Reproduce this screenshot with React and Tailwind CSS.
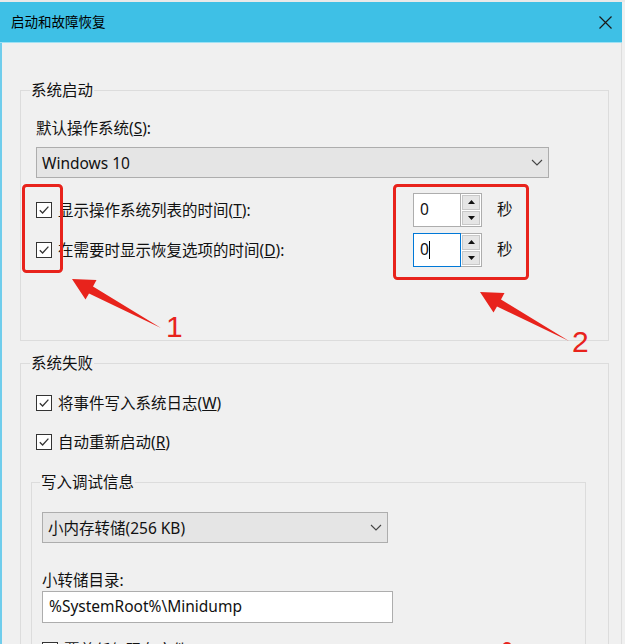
import React from 'react';

const Check = () => (
  <span className="w-[16px] h-[16px] border border-[#333333] bg-white flex items-center justify-center shrink-0">
    <svg width="12" height="12" viewBox="0 0 12 12">
      <path d="M1.8 6.2 L4.6 9 L10.4 2.6" fill="none" stroke="#333333" strokeWidth="1.3" />
    </svg>
  </span>
);

const Chevron = () => (
  <svg width="12" height="7" viewBox="0 0 12 7">
    <path d="M1 1 L6 6 L11 1" fill="none" stroke="#444444" strokeWidth="1.1" />
  </svg>
);

function Select({ value, className }) {
  return (
    <div className={`h-[31px] bg-[#e5e5e5] border border-[#adadad] flex items-center justify-between pl-[5px] pr-[5px] ${className}`}>
      <span className="text-[15.5px] leading-[20px]">{value}</span>
      <Chevron />
    </div>
  );
}

function Spin({ focused }) {
  return (
    <div className="flex h-[34px] w-[69px]">
      <div
        className={`w-[48px] h-full bg-white border flex items-center pl-[6px] text-[15.5px] ${
          focused ? 'border-[#0078d7]' : 'border-[#adadad]'
        }`}
      >
        <span>0</span>
        {focused && <span className="w-[1px] h-[18px] bg-black" />}
      </div>
      <div className="w-[21px] h-full border-y border-r border-[#adadad] bg-white flex flex-col p-[1px] gap-[1px]">
        <div className="flex-1 bg-[#e5e5e5] border border-[#c8c8c8] flex items-center justify-center">
          <svg width="7" height="4" viewBox="0 0 7 4"><path d="M0 4 L3.5 0 L7 4 Z" fill="#111" /></svg>
        </div>
        <div className="flex-1 bg-[#e5e5e5] border border-[#c8c8c8] flex items-center justify-center">
          <svg width="7" height="4" viewBox="0 0 7 4"><path d="M0 0 L3.5 4 L7 0 Z" fill="#111" /></svg>
        </div>
      </div>
    </div>
  );
}

function CheckRow({ children, className = '' }) {
  return (
    <div className={`flex items-center gap-[6px] h-[20px] ${className}`}>
      <Check />
      <span className="text-[15.5px] leading-[20px] whitespace-nowrap">{children}</span>
    </div>
  );
}

export default function App() {
  return (
    <div
      className="w-[625px] h-[644px] overflow-hidden relative bg-[#f0f0f0] text-[#111111]"
      style={{ fontFamily: '"Noto Sans", "Noto Sans CJK SC", sans-serif' }}
    >
      <div className="h-[2px] bg-[#e9e9e9]" />
      <div className="h-[40px] w-[622px] bg-[#3ec0e6] flex items-center justify-between pl-[11px] pr-[10px]">
        <span className="text-[13.5px] text-black">启动和故障恢复</span>
        <svg width="13" height="13" viewBox="0 0 13 13">
          <path d="M0.5 0.5 L12.5 12.5 M12.5 0.5 L0.5 12.5" stroke="#1a1a1a" strokeWidth="1.2" />
        </svg>
      </div>
      <div className="h-[1px] w-[622px] bg-[#9fe1f4]" />

      <div className="w-[622px] h-[601px] border-l-2 border-r border-l-[#6fcdec] border-r-[#dedede] pl-[18px] pt-[37px]">
        {/* 系统启动 */}
        <fieldset className="w-[589px] h-[261px] border border-[#dcdcdc]">
          <legend className="ml-[9px] px-[1px] text-[15.5px] leading-[20px]">系统启动</legend>
          <div className="pl-[15px] pt-[18px]">
            <div className="h-[20px] text-[15.5px] leading-[20px]">
              默认操作系统(<u>S</u>):
            </div>
            <Select value="Windows 10" className="mt-[9px] w-[513px]" />
            <div className="mt-[15px] flex flex-col gap-[6px]">
              <div className="flex items-center h-[34px]">
                <div className="w-[377px]">
                  <CheckRow>显示操作系统列表的时间(<u>T</u>):</CheckRow>
                </div>
                <Spin />
                <span className="ml-[15px] text-[15.5px]">秒</span>
              </div>
              <div className="flex items-center h-[34px]">
                <div className="w-[377px]">
                  <CheckRow>在需要时显示恢复选项的时间(<u>D</u>):</CheckRow>
                </div>
                <Spin focused />
                <span className="ml-[15px] text-[15.5px]">秒</span>
              </div>
            </div>
          </div>
        </fieldset>

        {/* 系统失败 */}
        <fieldset className="mt-[12px] w-[589px] h-[400px] border border-[#dcdcdc]">
          <legend className="ml-[9px] px-[1px] text-[15.5px] leading-[20px]">系统失败</legend>
          <div className="pl-[15px] pt-[20px]">
            <CheckRow>将事件写入系统日志(<u>W</u>)</CheckRow>
            <CheckRow className="mt-[19px]">自动重新启动(<u>R</u>)</CheckRow>

            <fieldset className="-ml-[5px] mt-[20px] w-[555px] h-[300px] border border-[#dcdcdc]">
              <legend className="ml-[8px] px-[1px] text-[15.5px] leading-[20px]">写入调试信息</legend>
              <div className="pl-[10px] pt-[20px]">
                <Select value="小内存转储(256 KB)" className="w-[346px]" />
                <div className="mt-[27px] h-[20px] text-[15.5px] leading-[20px]">小转储目录:</div>
                <div className="mt-[1px] w-[351px] h-[32px] bg-white border border-[#adadad] flex items-center pl-[6px] text-[15.5px]">
                  %SystemRoot%\Minidump
                </div>
                <CheckRow className="mt-[17px]">覆盖任何现有文件(<u>O</u>)</CheckRow>
              </div>
            </fieldset>
          </div>
        </fieldset>
      </div>

      {/* annotations */}
      <svg className="absolute inset-0 pointer-events-none" width="625" height="644" viewBox="0 0 625 644">
        <rect x="23.5" y="185.5" width="38" height="86" rx="3" fill="none" stroke="#e8231c" strokeWidth="3" />
        <rect x="394.5" y="185.5" width="133" height="93" rx="3" fill="none" stroke="#e8231c" strokeWidth="3" />
        <polygon points="72,279 96.5,280 93,286.5 161,328 89,293.5 85.5,299.5" fill="#e8231c" />
        <polygon
          points="72,279 96.5,280 93,286.5 161,328 89,293.5 85.5,299.5"
          fill="#e8231c"
          transform="translate(408 13)"
        />
        <text x="166" y="337" fill="#e8231c" fontSize="30" fontFamily="Liberation Sans, Arial, sans-serif">1</text>
        <text x="572" y="352" fill="#e8231c" fontSize="30" fontFamily="Liberation Sans, Arial, sans-serif">2</text>
        <circle cx="507" cy="647" r="5" fill="#e8231c" />
      </svg>
    </div>
  );
}
